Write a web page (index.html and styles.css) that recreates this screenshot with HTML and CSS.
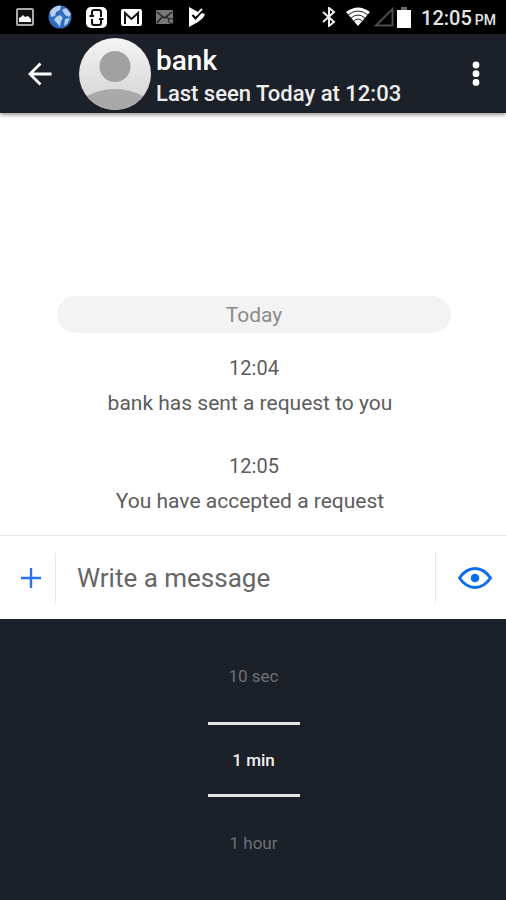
FILE: index.html
```html
<!DOCTYPE html>
<html lang="en">
<head>
<meta charset="utf-8">
<meta name="viewport" content="width=device-width, initial-scale=1">
<title>bank</title>
<link rel="stylesheet" href="styles.css">
</head>
<body>
<div class="status">
  <div class="status-icons">
    <svg width="18" height="18" viewBox="0 0 18 18"><rect x="1" y="1" width="16" height="16" rx="1" fill="#111" stroke="#aaa" stroke-width="2"/><path d="M3 14V10l2-1 2-2 2 2 3-1 3 3v3z" fill="#fff"/></svg>
    <svg width="24" height="24" viewBox="0 0 24 24"><circle cx="12" cy="12" r="11.500" fill="#2f6cc0"/><path d="M2 7C4 3 9 0 13 1l-1 4-4 2-1 4-4 1zM8 12l4-2 3 3-2 3-1 6-3-4-3-3zM14 5l4-2 5 6-2 3-4-2zM17 14l5-1-3 6-3 2z" fill="#b5d0f0"/></svg>
    <svg width="21" height="21" viewBox="0 0 21 21"><rect width="21" height="21" rx="5" fill="#fff"/><path d="M6 9V5q0-2 2-2h5q2 0 2 2v5M6 12v4q0 2 2 2h5q2 0 2-2v-3M3.500 9H8M13 12h4.500" fill="none" stroke="#111" stroke-width="2"/></svg>
    <svg width="21" height="17" viewBox="0 0 21 17"><rect width="21" height="17" rx="2" fill="#fff"/><path d="M4 15V4l6.500 6L17 4v11" fill="none" stroke="#111" stroke-width="2"/></svg>
    <svg width="18" height="15" viewBox="0 0 18 15"><rect width="17" height="14" rx="1" fill="#777"/><path d="M1 2l7.500 6L16 2M1 13l5-6M16 13l-5-6" fill="none" stroke="#222" stroke-width="1.500"/><circle cx="15" cy="11" r="2.500" fill="#777" stroke="#222"/></svg>
    <svg width="18" height="20" viewBox="0 0 18 20"><path d="M1 0l9 5 7 2-2 4-5 4-9 5z" fill="#fff"/><path d="M4.500 8l3 3.500L15 3" fill="none" stroke="#000" stroke-width="2"/><path d="M8 8l6-6" fill="none" stroke="#fff" stroke-width="2"/></svg>
  </div>
  <div class="status-system">
    <svg width="14" height="20" viewBox="0 0 14 20"><path d="M1 5l11 10-5 4V1l5 4L1 15" fill="none" stroke="#eee" stroke-width="2"/></svg>
    <svg width="26" height="20" viewBox="0 0 26 20"><path d="M1 5Q13-4 25 5L13 19z" fill="#fff"/><path d="M3 8q10-8 20 0M6 11q7-6 14 0M9 14q4-4 8 0" fill="none" stroke="#222" stroke-width="1"/></svg>
    <svg width="20" height="20" viewBox="0 0 20 20"><path d="M2 18.500L18.500 2v16.500z" fill="none" stroke="#4c4c4c" stroke-width="2"/></svg>
    <svg width="14" height="21" viewBox="0 0 14 21"><path d="M0 3h14v18H0z" fill="#fff"/><path d="M4 0h6v3H4z" fill="#666"/></svg>
    <span class="clock">12:05 <small>PM</small></span>
  </div>
</div>

<header class="header">
  <button class="icon-button back" aria-label="Back"><svg width="24" height="24" viewBox="0 0 24 24"><path d="M23.500 12H2M12.500 1.500L2 12l10.500 10.500" fill="none" stroke="#fff" stroke-width="2.800"/></svg></button>
  <svg class="avatar" width="72" height="72" viewBox="0 0 72 72" role="img" aria-label="bank"><defs><linearGradient id="disc" x2="0" y2="1"><stop stop-color="#f4f4f4"/><stop offset="1" stop-color="#d2d2d2"/></linearGradient><clipPath id="round"><circle cx="36" cy="36" r="36"/></clipPath></defs><g clip-path="url(#round)"><rect width="72" height="72" fill="url(#disc)"/><circle cx="36" cy="28.500" r="15.500" fill="#a1a1a1"/><ellipse cx="36" cy="76" rx="40" ry="25" fill="#a9a9a9"/></g></svg>
  <div class="contact">
    <h1>bank</h1>
    <p>Last seen Today at 12:03</p>
  </div>
  <button class="icon-button more" aria-label="More options"><svg width="8" height="26" viewBox="0 0 8 26"><g fill="#fff"><circle cx="4" cy="4" r="3.400"/><circle cx="4" cy="12.700" r="3.400"/><circle cx="4" cy="21.400" r="3.400"/></g></svg></button>
</header>

<main class="chat">
  <h2 class="day">Today</h2>
  <article class="event"><time>12:04</time><p>bank has sent a request to you</p></article>
  <article class="event"><time>12:05</time><p>You have accepted a request</p></article>
</main>

<form class="composer">
  <button type="button" class="icon-button add" aria-label="Add attachment"><svg width="20" height="20" viewBox="0 0 20 20"><path d="M10 0v20M0 10h20" stroke="#2474f8" stroke-width="2.400"/></svg></button>
  <input class="message" type="text" placeholder="Write a message" aria-label="Write a message">
  <button type="button" class="icon-button eye" aria-label="Message lifetime"><svg width="36" height="24" viewBox="0 0 36 24"><path d="M2.500 12Q9 2.500 18 2.500T33.500 12Q27 21.500 18 21.500T2.500 12z" fill="none" stroke="#0d6cf2" stroke-width="3"/><circle cx="18" cy="12" r="4.300" fill="#0d6cf2"/></svg></button>
</form>

<section class="picker" aria-label="Message lifetime">
  <button class="option">10 sec</button>
  <button class="option selected" aria-pressed="true">1 min</button>
  <button class="option">1 hour</button>
</section>
</body>
</html>
```
FILE: styles.css
```css
* { box-sizing: border-box; }

body {
  margin: 0;
  min-height: 100vh;
  display: flex;
  flex-direction: column;
  background: #fff;
  color: #5c5c5c;
  font-family: Roboto, "Liberation Sans", sans-serif;
}

h1, h2, p { margin: 0; font-weight: 400; }
button { padding: 0; border: 0; background: none; font: inherit; }
svg { display: block; flex: none; }

.status {
  height: 34px;
  padding: 0 10px 0 16px;
  display: flex;
  align-items: center;
  justify-content: space-between;
  background: #000;
}
.status-icons { display: flex; align-items: center; gap: 14px; }
.status-system { display: flex; align-items: center; gap: 3px; }
.status-system svg:first-child { margin-right: 6px; }
.clock { margin-left: 7px; padding-top: 2px; color: #e4e4e4; font-size: 20px; font-weight: 500; white-space: nowrap; }
.clock small { font-size: 14px; margin-left: -2px; }

.header {
  position: relative;
  height: 79px;
  padding: 0 12px 0 16px;
  display: flex;
  align-items: center;
  background: #1c2028;
  box-shadow: 0 2px 4px rgba(0, 0, 0, .4);
}
.icon-button { display: flex; align-items: center; justify-content: center; }
.back { width: 48px; height: 48px; }
.avatar { margin-left: 15px; }
.contact { flex: 1; padding: 8px 0 0 5px; color: #fff; }
.contact h1 { font-size: 28px; line-height: 32px; font-weight: 500; }
.contact p { font-size: 22px; line-height: 34px; font-weight: 500; color: #eee; }
.more { width: 36px; height: 48px; }

.chat {
  flex: 1;
  padding: 0 55px 16px 57px;
  display: flex;
  flex-direction: column;
  justify-content: flex-end;
  text-align: center;
}
.day {
  margin-bottom: 18px;
  padding-top: 2px;
  border-radius: 20px;
  background: #f3f3f3;
  color: #8a8a8a;
  font-size: 21px;
  line-height: 35px;
}
.event { font-size: 20px; line-height: 35px; }
.event + .event { margin-top: 28px; }
.event time { display: block; }
.event p { padding-right: 8px; font-size: 21px; }

.composer {
  height: 84px;
  padding: 0 13px 0 7px;
  display: flex;
  align-items: center;
  border-top: 1px solid #e6e6e6;
}
.add { width: 48px; height: 48px; }
.message {
  flex: 1;
  min-width: 0;
  height: 50px;
  padding: 0 21px;
  border: solid #e6e6e6;
  border-width: 0 1px;
  background: none;
  color: #555;
  font: 26px Roboto, "Liberation Sans", sans-serif;
}
.message::placeholder { color: #666; opacity: 1; }
.eye { width: 57px; height: 48px; padding-left: 21px; }

.picker {
  height: 281px;
  padding-left: 1px;
  display: flex;
  flex-direction: column;
  align-items: center;
  justify-content: center;
  background: #1c2028;
}
.option {
  width: 92px;
  height: 92px;
  color: #6e7176;
  font-size: 17px;
}
.selected {
  height: 75px;
  border: solid #e4e6e6;
  border-width: 3px 0;
  color: #f2f2f2;
  font-weight: 500;
}
```
